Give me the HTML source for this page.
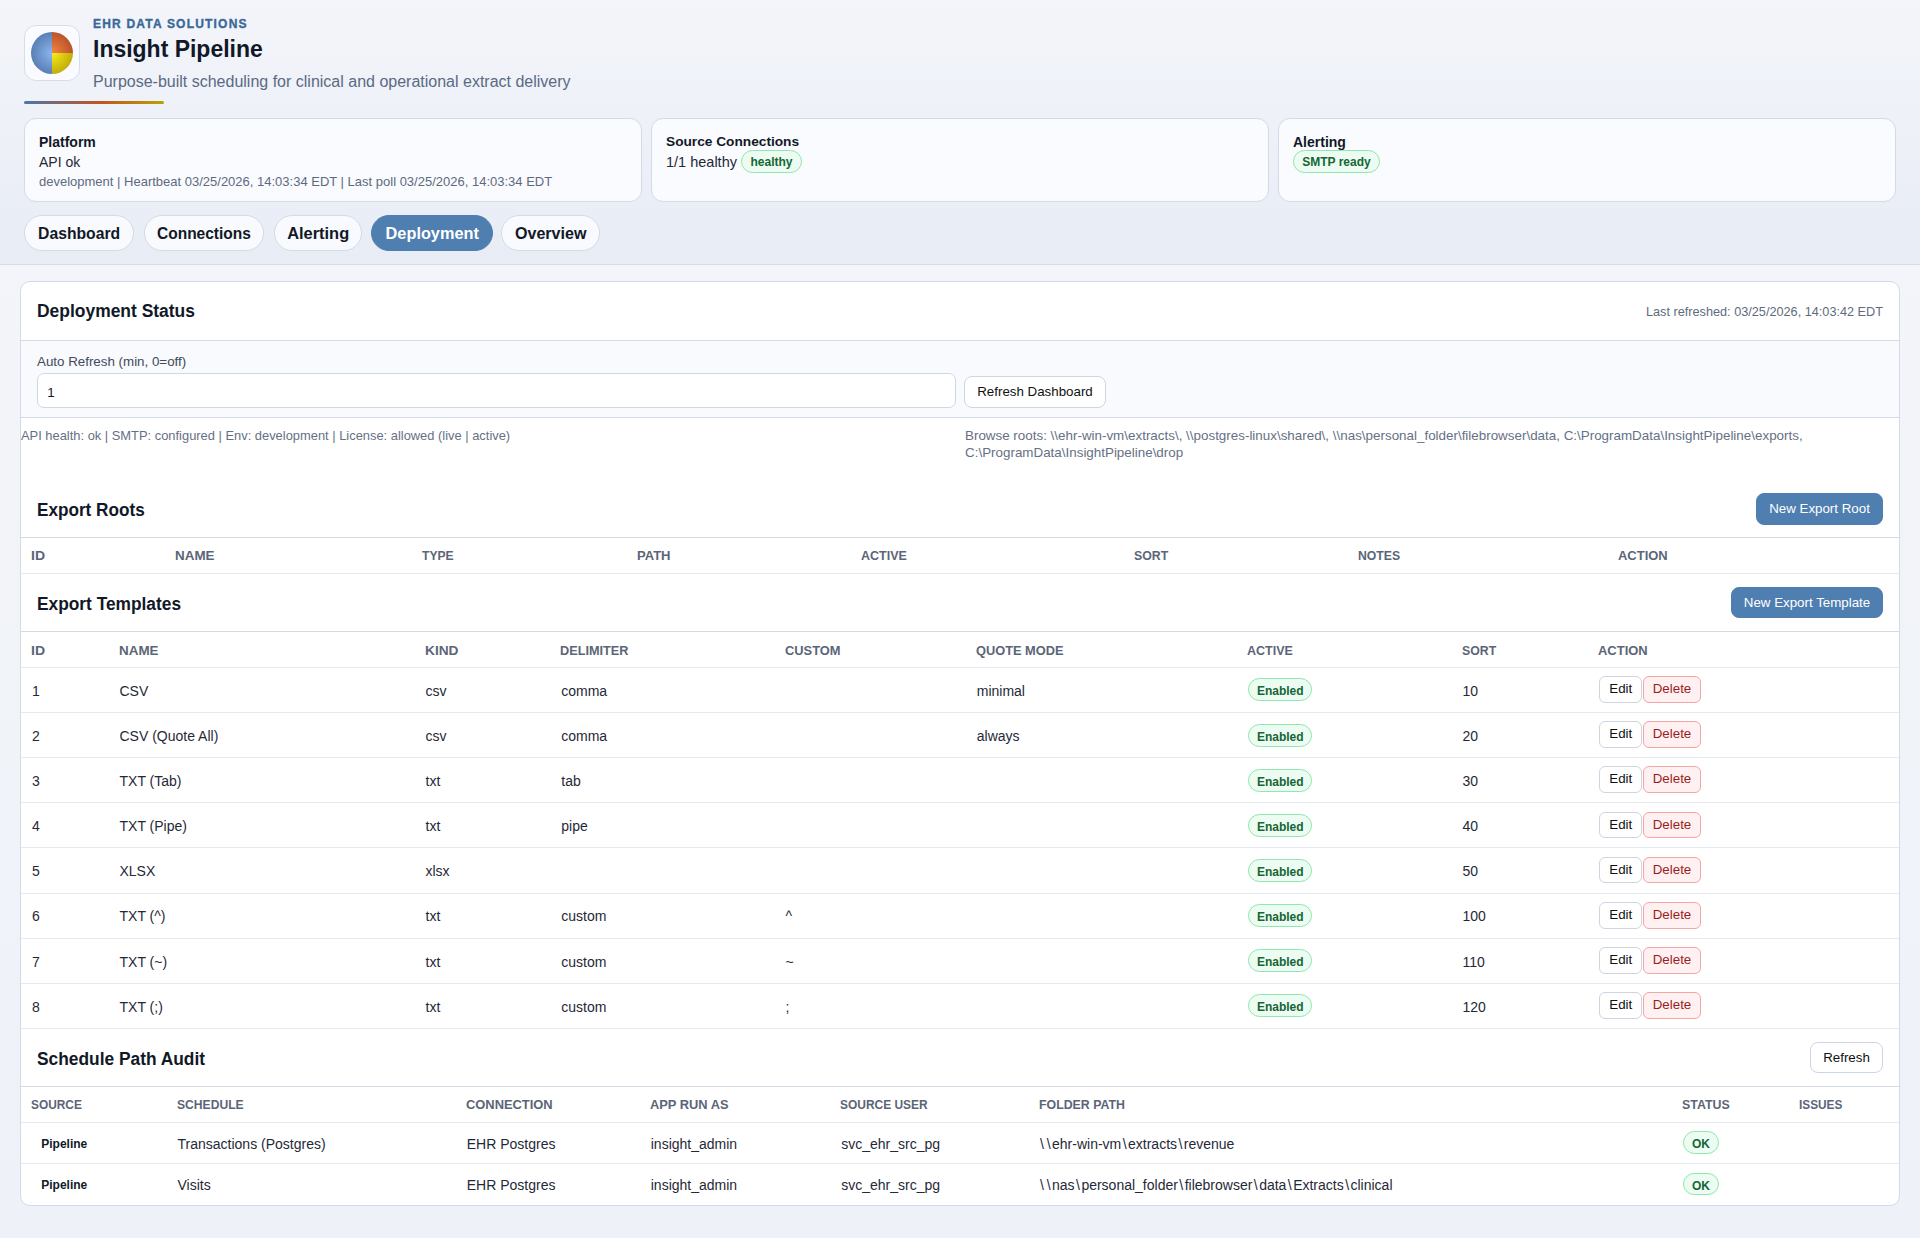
<!DOCTYPE html>
<html><head><meta charset="utf-8">
<style>
*{box-sizing:border-box;margin:0;padding:0}
html,body{width:1920px;height:1238px;overflow:hidden}
body{font-family:"Liberation Sans",sans-serif;color:#1f2937;background:linear-gradient(180deg,#f4f6fa 0%,#eef1f8 100%);position:relative}
.abs{position:absolute;white-space:pre}
#hdr{position:absolute;left:0;top:0;width:1920px;height:265px;border-bottom:1px solid #d3dbe7;background:linear-gradient(180deg,#f3f5fa 0%,#e8ecf5 100%)}
#logo{position:absolute;left:24px;top:25px;width:56px;height:56px;border:1px solid #d6deea;border-radius:12px;background:#fafbfe}
.scard{position:absolute;top:118px;width:618px;height:84px;border:1px solid #d3dbe7;border-radius:12px;background:#fafbfe}
.pill{position:absolute;top:215px;height:36px;border:1px solid #d3dbe7;border-radius:18px;background:#f9fafd;font-weight:700;font-size:16.5px;line-height:35px;text-align:center;color:#111827}
.pill span{display:inline-block;transform-origin:50% 50%}
.pill.on{background:#4f7eb0;border-color:#4f7eb0;color:#fff}
.badge{position:absolute;height:22px;border:1px solid #8ee8ab;border-radius:12px;background:#ecfcf2;color:#166534;font-weight:700;font-size:12px;line-height:25px;text-align:center}
#card{position:absolute;left:20px;top:281px;width:1880px;height:925px;border:1px solid #d3dbe7;border-radius:10px;background:#fff;overflow:hidden}
.sec{position:absolute;left:0;width:1878px}
.bline{position:absolute;left:0;width:1878px;height:1px;background:#d3dbe7}
.rline{position:absolute;left:0;width:1878px;height:1px;background:#e7ebf1}
.ttl{position:absolute;left:16px;font-weight:700;font-size:18px;line-height:20px;color:#111827;white-space:pre;transform-origin:0 0}
.btn{position:absolute;height:31px;border:1px solid #cdd5e1;border-radius:8px;background:#fff;font-size:13.333px;line-height:29px;text-align:center;color:#111;white-space:pre}
.btn.pri{background:#4f7eb0;border-color:#4f7eb0;color:#fff}
.th{position:absolute;font-weight:700;font-size:13.5px;line-height:16px;color:#5b6577;white-space:pre;transform-origin:0 0}
.td{position:absolute;font-size:14px;line-height:18px;color:#1f2937;white-space:pre}
.sb{position:absolute;height:26.8px;border:1px solid #cdd5e1;border-radius:6px;background:#fff;font-size:13.333px;line-height:24.5px;text-align:center;color:#111;white-space:pre}
i{font-style:normal;padding:0 1.45px}
i.b{padding:0}
.sb.del{border-color:#f4a5a5;background:#fff1f1;color:#9b1c1c}
</style></head><body>
<div id="hdr">
  <div id="logo">
    <svg width="56" height="56" viewBox="0 0 56 56" style="position:absolute;left:-1px;top:-1px">
      <defs>
        <radialGradient id="gb" cx="28" cy="28" r="21" gradientUnits="userSpaceOnUse"><stop offset="0" stop-color="#8ab6f0"/><stop offset="1" stop-color="#5a7fb4"/></radialGradient>
        <radialGradient id="go" cx="28" cy="28" r="21" gradientUnits="userSpaceOnUse"><stop offset="0" stop-color="#f5843e"/><stop offset="1" stop-color="#b9542a"/></radialGradient>
        <radialGradient id="gy" cx="28" cy="28" r="21" gradientUnits="userSpaceOnUse"><stop offset="0" stop-color="#f8ee1a"/><stop offset="1" stop-color="#c2ad08"/></radialGradient>
      </defs>
      <path d="M28 7 A21 21 0 0 0 28 49 Z" fill="url(#gb)"/>
      <path d="M28 28 L28 7 A21 21 0 0 1 49 28 Z" fill="url(#go)"/>
      <path d="M28 28 L49 28 A21 21 0 0 1 28 49 Z" fill="url(#gy)"/>
    </svg>
  </div>
  <div class="abs" style="left:93px;top:16px;font-size:12px;line-height:16px;font-weight:700;letter-spacing:1.2px;color:#3a6898;-webkit-text-stroke:0.35px #3a6898">EHR DATA SOLUTIONS</div>
  <div class="abs" style="left:93px;top:36px;font-size:23.4px;line-height:26px;font-weight:700;color:#111827;transform:scaleX(0.982);transform-origin:0 0">Insight Pipeline</div>
  <div class="abs" style="left:93px;top:72px;font-size:16px;line-height:20px;color:#5a6a84">Purpose-built scheduling for clinical and operational extract delivery</div>
  <div style="position:absolute;left:24px;top:101px;width:140px;height:3px;border-radius:2px;background:linear-gradient(90deg,#4a78a8 0%,#c2541e 55%,#b7a400 100%)"></div>

  <div class="scard" style="left:24px">
    <div class="abs" style="left:14px;top:13px;font-size:14px;line-height:20px;font-weight:700;color:#111827">Platform</div>
    <div class="abs" style="left:14px;top:33px;font-size:14px;line-height:20px;color:#1f2937">API ok</div>
    <div class="abs" style="left:14px;top:52.5px;font-size:13px;line-height:20px;color:#5d6a7e">development | Heartbeat 03/25/2026, 14:03:34 EDT | Last poll 03/25/2026, 14:03:34 EDT</div>
  </div>
  <div class="scard" style="left:651px">
    <div class="abs" style="left:14px;top:13px;font-size:13.7px;line-height:20px;font-weight:700;color:#111827">Source Connections</div>
    <div class="abs" style="left:14px;top:33px;font-size:14.5px;line-height:20px;color:#1f2937">1/1 healthy</div>
    <div class="badge" style="left:89px;top:31px;width:61px;height:23px;line-height:23px">healthy</div>
  </div>
  <div class="scard" style="left:1278px">
    <div class="abs" style="left:14px;top:13px;font-size:14px;line-height:20px;font-weight:700;color:#111827">Alerting</div>
    <div class="badge" style="left:14px;top:31px;width:87px;height:23px;line-height:23px">SMTP ready</div>
  </div>

  <div class="pill" style="left:24px;width:110px"><span style="transform:scaleX(0.952)">Dashboard</span></div>
  <div class="pill" style="left:144px;width:120px"><span style="transform:scaleX(0.94)">Connections</span></div>
  <div class="pill" style="left:274px;width:88px"><span style="transform:scaleX(0.995)">Alerting</span></div>
  <div class="pill on" style="left:371px;width:122px"><span style="transform:scaleX(0.987)">Deployment</span></div>
  <div class="pill" style="left:501px;width:99px"><span style="transform:scaleX(0.974)">Overview</span></div>
</div>

<div id="card">
  <!-- header -->
  <div class="ttl" style="top:19.3px;transform:scaleX(0.969)">Deployment Status</div>
  <div class="abs" style="right:16px;top:22px;font-size:12.7px;line-height:16px;color:#5e6b7d">Last refreshed: 03/25/2026, 14:03:42 EDT</div>
  <div class="bline" style="top:58px"></div>
  <!-- filter -->
  <div class="sec" style="top:59px;height:76px;background:#f8fafd"></div>
  <div class="abs" style="left:16px;top:72px;font-size:13.35px;line-height:16px;color:#3f4a5a">Auto Refresh (min, 0=off)</div>
  <div style="position:absolute;left:16px;top:91px;width:919px;height:35px;border:1px solid #cfd7e3;border-radius:7px;background:#fff"></div>
  <div class="abs" style="left:26.2px;top:102px;font-size:13.333px;line-height:18px;color:#111827">1</div>
  <div class="btn" style="left:943px;top:94px;width:142px;height:32px;line-height:30px">Refresh Dashboard</div>
  <div class="bline" style="top:135px"></div>
  <!-- stats -->
  <div class="abs" style="left:0px;top:145px;font-size:12.9px;line-height:17px;color:#667085">API health: ok | SMTP: configured | Env: development | License: allowed (live | active)</div>
  <div class="abs" style="left:944px;top:145px;font-size:13.4px;line-height:17px;color:#667085">Browse roots: <i class="b">\</i><i class="b">\</i>ehr-win-vm<i class="b">\</i>extracts<i class="b">\</i>, <i class="b">\</i><i class="b">\</i>postgres-linux<i class="b">\</i>shared<i class="b">\</i>, <i class="b">\</i><i class="b">\</i>nas<i class="b">\</i>personal_folder<i class="b">\</i>filebrowser<i class="b">\</i>data, C:<i class="b">\</i>ProgramData<i class="b">\</i>InsightPipeline<i class="b">\</i>exports,
C:<i class="b">\</i>ProgramData<i class="b">\</i>InsightPipeline<i class="b">\</i>drop</div>

  <!-- Export Roots -->
  <div class="ttl" style="top:217.6px;transform:scaleX(0.953)">Export Roots</div>
  <div class="btn pri" style="left:1735px;top:211px;width:127px;height:32px;line-height:30px">New Export Root</div>
  <div class="bline" style="top:255px"></div>
  <div id="erh">
  <div class="th" style="left:10.2px;top:266.3px;transform:scaleX(1.04)">ID</div>
  <div class="th" style="left:153.7px;top:266.3px;transform:scaleX(0.994)">NAME</div>
  <div class="th" style="left:401.2px;top:266.3px;transform:scaleX(0.897)">TYPE</div>
  <div class="th" style="left:616.2px;top:266.3px;transform:scaleX(0.963)">PATH</div>
  <div class="th" style="left:840.2px;top:266.3px;transform:scaleX(0.925)">ACTIVE</div>
  <div class="th" style="left:1112.7px;top:266.3px;transform:scaleX(0.911)">SORT</div>
  <div class="th" style="left:1337.2px;top:266.3px;transform:scaleX(0.906)">NOTES</div>
  <div class="th" style="left:1596.9px;top:266.3px;transform:scaleX(0.96)">ACTION</div>
  </div><!--/erh-->
  <div class="rline" style="top:291px"></div>

  <!-- Export Templates -->
  <div class="ttl" style="top:312px;transform:scaleX(0.962)">Export Templates</div>
  <div class="btn pri" style="left:1710px;top:305px;width:152px">New Export Template</div>
  <div class="bline" style="top:349px"></div>
  <div id="eth">
  <div class="th" style="left:10.2px;top:360.5px;transform:scaleX(1.04)">ID</div>
  <div class="th" style="left:97.7px;top:360.5px;transform:scaleX(0.994)">NAME</div>
  <div class="th" style="left:403.7px;top:360.5px;transform:scaleX(1.016)">KIND</div>
  <div class="th" style="left:539.45px;top:360.5px;transform:scaleX(0.941)">DELIMITER</div>
  <div class="th" style="left:763.7px;top:360.5px;transform:scaleX(0.952)">CUSTOM</div>
  <div class="th" style="left:954.95px;top:360.5px;transform:scaleX(0.948)">QUOTE MODE</div>
  <div class="th" style="left:1226.45px;top:360.5px;transform:scaleX(0.925)">ACTIVE</div>
  <div class="th" style="left:1440.7px;top:360.5px;transform:scaleX(0.911)">SORT</div>
  <div class="th" style="left:1577.45px;top:360.5px;transform:scaleX(0.96)">ACTION</div>
  </div><!--/eth-->
  <div class="rline" style="top:385px"></div>
  <div id="etrows">
  <div class="td" style="left:11px;top:399.75px">1</div>
  <div class="td" style="left:98.5px;top:399.75px">CSV</div>
  <div class="td" style="left:404.5px;top:399.75px">csv</div>
  <div class="td" style="left:540.25px;top:399.75px">comma</div>
  <div class="td" style="left:955.75px;top:399.75px">minimal</div>
  <div class="badge" style="left:1227.25px;top:396.4px;width:64px;height:23px">Enabled</div>
  <div class="td" style="left:1441.5px;top:399.75px">10</div>
  <div class="sb" style="left:1578.25px;top:394.1px;width:43px">Edit</div>
  <div class="sb del" style="left:1622px;top:394.1px;width:58px">Delete</div>
  <div class="rline" style="top:430px"></div>
  <div class="td" style="left:11px;top:444.89px">2</div>
  <div class="td" style="left:98.5px;top:444.89px">CSV (Quote All)</div>
  <div class="td" style="left:404.5px;top:444.89px">csv</div>
  <div class="td" style="left:540.25px;top:444.89px">comma</div>
  <div class="td" style="left:955.75px;top:444.89px">always</div>
  <div class="badge" style="left:1227.25px;top:441.54px;width:64px;height:23px">Enabled</div>
  <div class="td" style="left:1441.5px;top:444.89px">20</div>
  <div class="sb" style="left:1578.25px;top:439.24px;width:43px">Edit</div>
  <div class="sb del" style="left:1622px;top:439.24px;width:58px">Delete</div>
  <div class="rline" style="top:475px"></div>
  <div class="td" style="left:11px;top:490.03px">3</div>
  <div class="td" style="left:98.5px;top:490.03px">TXT (Tab)</div>
  <div class="td" style="left:404.5px;top:490.03px">txt</div>
  <div class="td" style="left:540.25px;top:490.03px">tab</div>
  <div class="badge" style="left:1227.25px;top:486.68px;width:64px;height:23px">Enabled</div>
  <div class="td" style="left:1441.5px;top:490.03px">30</div>
  <div class="sb" style="left:1578.25px;top:484.38px;width:43px">Edit</div>
  <div class="sb del" style="left:1622px;top:484.38px;width:58px">Delete</div>
  <div class="rline" style="top:520px"></div>
  <div class="td" style="left:11px;top:535.17px">4</div>
  <div class="td" style="left:98.5px;top:535.17px">TXT (Pipe)</div>
  <div class="td" style="left:404.5px;top:535.17px">txt</div>
  <div class="td" style="left:540.25px;top:535.17px">pipe</div>
  <div class="badge" style="left:1227.25px;top:531.82px;width:64px;height:23px">Enabled</div>
  <div class="td" style="left:1441.5px;top:535.17px">40</div>
  <div class="sb" style="left:1578.25px;top:529.52px;width:43px">Edit</div>
  <div class="sb del" style="left:1622px;top:529.52px;width:58px">Delete</div>
  <div class="rline" style="top:565px"></div>
  <div class="td" style="left:11px;top:580.31px">5</div>
  <div class="td" style="left:98.5px;top:580.31px">XLSX</div>
  <div class="td" style="left:404.5px;top:580.31px">xlsx</div>
  <div class="badge" style="left:1227.25px;top:576.96px;width:64px;height:23px">Enabled</div>
  <div class="td" style="left:1441.5px;top:580.31px">50</div>
  <div class="sb" style="left:1578.25px;top:574.66px;width:43px">Edit</div>
  <div class="sb del" style="left:1622px;top:574.66px;width:58px">Delete</div>
  <div class="rline" style="top:611px"></div>
  <div class="td" style="left:11px;top:625.45px">6</div>
  <div class="td" style="left:98.5px;top:625.45px">TXT (^)</div>
  <div class="td" style="left:404.5px;top:625.45px">txt</div>
  <div class="td" style="left:540.25px;top:625.45px">custom</div>
  <div class="td" style="left:764.5px;top:625.45px">^</div>
  <div class="badge" style="left:1227.25px;top:622.1px;width:64px;height:23px">Enabled</div>
  <div class="td" style="left:1441.5px;top:625.45px">100</div>
  <div class="sb" style="left:1578.25px;top:619.8px;width:43px">Edit</div>
  <div class="sb del" style="left:1622px;top:619.8px;width:58px">Delete</div>
  <div class="rline" style="top:656px"></div>
  <div class="td" style="left:11px;top:670.59px">7</div>
  <div class="td" style="left:98.5px;top:670.59px">TXT (~)</div>
  <div class="td" style="left:404.5px;top:670.59px">txt</div>
  <div class="td" style="left:540.25px;top:670.59px">custom</div>
  <div class="td" style="left:764.5px;top:670.59px">~</div>
  <div class="badge" style="left:1227.25px;top:667.24px;width:64px;height:23px">Enabled</div>
  <div class="td" style="left:1441.5px;top:670.59px">110</div>
  <div class="sb" style="left:1578.25px;top:664.94px;width:43px">Edit</div>
  <div class="sb del" style="left:1622px;top:664.94px;width:58px">Delete</div>
  <div class="rline" style="top:701px"></div>
  <div class="td" style="left:11px;top:715.73px">8</div>
  <div class="td" style="left:98.5px;top:715.73px">TXT (;)</div>
  <div class="td" style="left:404.5px;top:715.73px">txt</div>
  <div class="td" style="left:540.25px;top:715.73px">custom</div>
  <div class="td" style="left:764.5px;top:715.73px">;</div>
  <div class="badge" style="left:1227.25px;top:712.38px;width:64px;height:23px">Enabled</div>
  <div class="td" style="left:1441.5px;top:715.73px">120</div>
  <div class="sb" style="left:1578.25px;top:710.08px;width:43px">Edit</div>
  <div class="sb del" style="left:1622px;top:710.08px;width:58px">Delete</div>
  <div class="rline" style="top:746px"></div>
  </div><!--/etrows-->

  <!-- Schedule Path Audit -->
  <div class="ttl" style="top:766.5px;transform:scaleX(0.964)">Schedule Path Audit</div>
  <div class="btn" style="left:1789px;top:760px;width:73px">Refresh</div>
  <div class="bline" style="top:804px"></div>
  <div id="sph">
  <div class="th" style="left:9.95px;top:815px;transform:scaleX(0.881)">SOURCE</div>
  <div class="th" style="left:155.7px;top:815px;transform:scaleX(0.897)">SCHEDULE</div>
  <div class="th" style="left:444.95px;top:815px;transform:scaleX(0.955)">CONNECTION</div>
  <div class="th" style="left:628.95px;top:815px;transform:scaleX(0.951)">APP RUN AS</div>
  <div class="th" style="left:819.45px;top:815px;transform:scaleX(0.885)">SOURCE USER</div>
  <div class="th" style="left:1018.2px;top:815px;transform:scaleX(0.914)">FOLDER PATH</div>
  <div class="th" style="left:1661.45px;top:815px;transform:scaleX(0.917)">STATUS</div>
  <div class="th" style="left:1778.2px;top:815px;transform:scaleX(0.876)">ISSUES</div>
  </div><!--/sph-->
  <div class="rline" style="top:840px"></div>
  <div id="sprows">
  <div class="abs" style="left:20.25px;top:853.5px;font-size:12px;line-height:16px;font-weight:700;color:#111827">Pipeline</div>
  <div class="td" style="left:156.5px;top:852.6px">Transactions (Postgres)</div>
  <div class="td" style="left:445.75px;top:852.6px">EHR Postgres</div>
  <div class="td" style="left:629.75px;top:852.6px">insight_admin</div>
  <div class="td" style="left:820.25px;top:852.6px">svc_ehr_src_pg</div>
  <div class="td" style="left:1017.5px;top:852.6px"><i>\</i><i>\</i>ehr-win-vm<i>\</i>extracts<i>\</i>revenue</div>
  <div class="badge" style="left:1662px;top:849.25px;width:36px;height:22.5px">OK</div>
  <div class="rline" style="top:881px"></div>
  <div class="abs" style="left:20.25px;top:894.8px;font-size:12px;line-height:16px;font-weight:700;color:#111827">Pipeline</div>
  <div class="td" style="left:156.5px;top:893.9px">Visits</div>
  <div class="td" style="left:445.75px;top:893.9px">EHR Postgres</div>
  <div class="td" style="left:629.75px;top:893.9px">insight_admin</div>
  <div class="td" style="left:820.25px;top:893.9px">svc_ehr_src_pg</div>
  <div class="td" style="left:1017.5px;top:893.9px"><i>\</i><i>\</i>nas<i>\</i>personal_folder<i>\</i>filebrowser<i>\</i>data<i>\</i>Extracts<i>\</i>clinical</div>
  <div class="badge" style="left:1662px;top:890.55px;width:36px;height:22.5px">OK</div>
  </div><!--/sprows-->
</div>
</body></html>
